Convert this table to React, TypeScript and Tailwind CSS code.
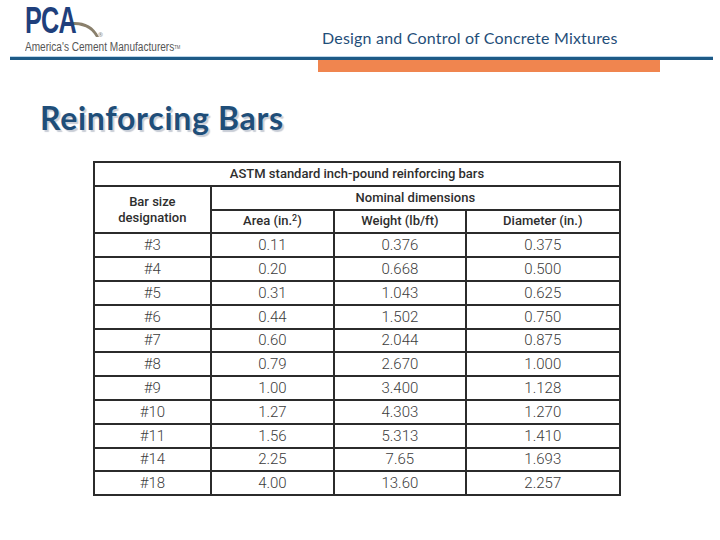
const rows = [
  ['#3', '0.11', '0.376', '0.375'],
  ['#4', '0.20', '0.668', '0.500'],
  ['#5', '0.31', '1.043', '0.625'],
  ['#6', '0.44', '1.502', '0.750'],
  ['#7', '0.60', '2.044', '0.875'],
  ['#8', '0.79', '2.670', '1.000'],
  ['#9', '1.00', '3.400', '1.128'],
  ['#10', '1.27', '4.303', '1.270'],
  ['#11', '1.56', '5.313', '1.410'],
  ['#14', '2.25', '7.65', '1.693'],
  ['#18', '4.00', '13.60', '2.257'],
];

function PcaLogo() {
  return (
    <div className="relative w-[170px] h-[56px]">
      <svg className="absolute left-[40px] top-[18px]" width="40" height="20" viewBox="0 0 40 20">
        <path d="M0 5 C 14 2, 28 5, 34 19 L 31 19 C 25 8, 14 6, 0 7 Z" fill="#8a806c" />
      </svg>
      <span className="absolute left-0 top-0 pr-[4px] origin-left scale-x-[0.7] whitespace-nowrap font-['Liberation_Sans',sans-serif] text-[36px] leading-[41px] font-bold text-[#1f3f7c]">
        P<span className="-ml-[1px]">C</span><span className="-ml-[1px]">A</span>
      </span>
      <span className="absolute left-[73px] top-[32px] text-[6px] leading-none text-[#888]">®</span>
      <div className="absolute left-0 top-[40px] origin-left scale-x-[0.84] whitespace-nowrap font-['Liberation_Sans',sans-serif] text-[12px] leading-[14px] text-[#555]">
        America's Cement Manufacturers<sup className="text-[5px]">TM</sup>
      </div>
    </div>
  );
}

export default function App() {
  const cell = 'border-2 border-[#2b2b2b] text-center p-0';
  return (
    <div className="w-[720px] h-[540px] bg-white overflow-hidden">
      <header className="flex h-[56px] pl-[25px]">
        <PcaLogo />
        <div className="ml-[127px] pt-[29px] font-['Lato',sans-serif] text-[16px] leading-[18px] tracking-[0.2px] text-[#1f4e79]">
          Design and Control of Concrete Mixtures
        </div>
      </header>
      <div className="ml-[10px] w-[703px] h-[1px] bg-[#bcd6ea]" />
      <div className="ml-[10px] w-[703px] h-[3px] bg-[#1d5a86]" />
      <div className="ml-[318px] w-[342px] h-[12px] bg-[#f0854f]" />

      <h1 className="mt-[28px] ml-[40px] font-['Lato',sans-serif] text-[32px] leading-[36px] font-bold tracking-[0.7px] text-[#1f4e79] [text-shadow:2px_2px_1px_#c8cdd6]">
        Reinforcing Bars
      </h1>

      <table className="mt-[25px] ml-[93px] w-[528px] border-collapse font-['Roboto',sans-serif] text-[#3a3a3a]">
        <colgroup>
          <col className="w-[117px]" />
          <col className="w-[124px]" />
          <col className="w-[132px]" />
          <col className="w-[155px]" />
        </colgroup>
        <thead className="text-[13px] leading-[16px] font-medium text-[#2e2e2e]">
          <tr className="h-[23.8px]">
            <th colSpan={4} className={cell + ' font-medium'}>
              ASTM standard inch-pound reinforcing bars
            </th>
          </tr>
          <tr className="h-[23.8px]">
            <th rowSpan={2} className={cell + ' font-medium'}>
              Bar size
              <br />
              designation
            </th>
            <th colSpan={3} className={cell + ' font-medium'}>
              Nominal dimensions
            </th>
          </tr>
          <tr className="h-[23.8px]">
            <th className={cell + ' font-medium'}>
              Area (in.<sup className="text-[9px]">2</sup>)
            </th>
            <th className={cell + ' font-medium'}>Weight (lb/ft)</th>
            <th className={cell + ' font-medium'}>Diameter (in.)</th>
          </tr>
        </thead>
        <tbody className="text-[15px] leading-[18px] font-light text-[#3c3c3c]">
          {rows.map((r) => (
            <tr key={r[0]} className="h-[23.8px]">
              {r.map((v, i) => (
                <td key={i} className={cell}>
                  {v}
                </td>
              ))}
            </tr>
          ))}
        </tbody>
      </table>
    </div>
  );
}
